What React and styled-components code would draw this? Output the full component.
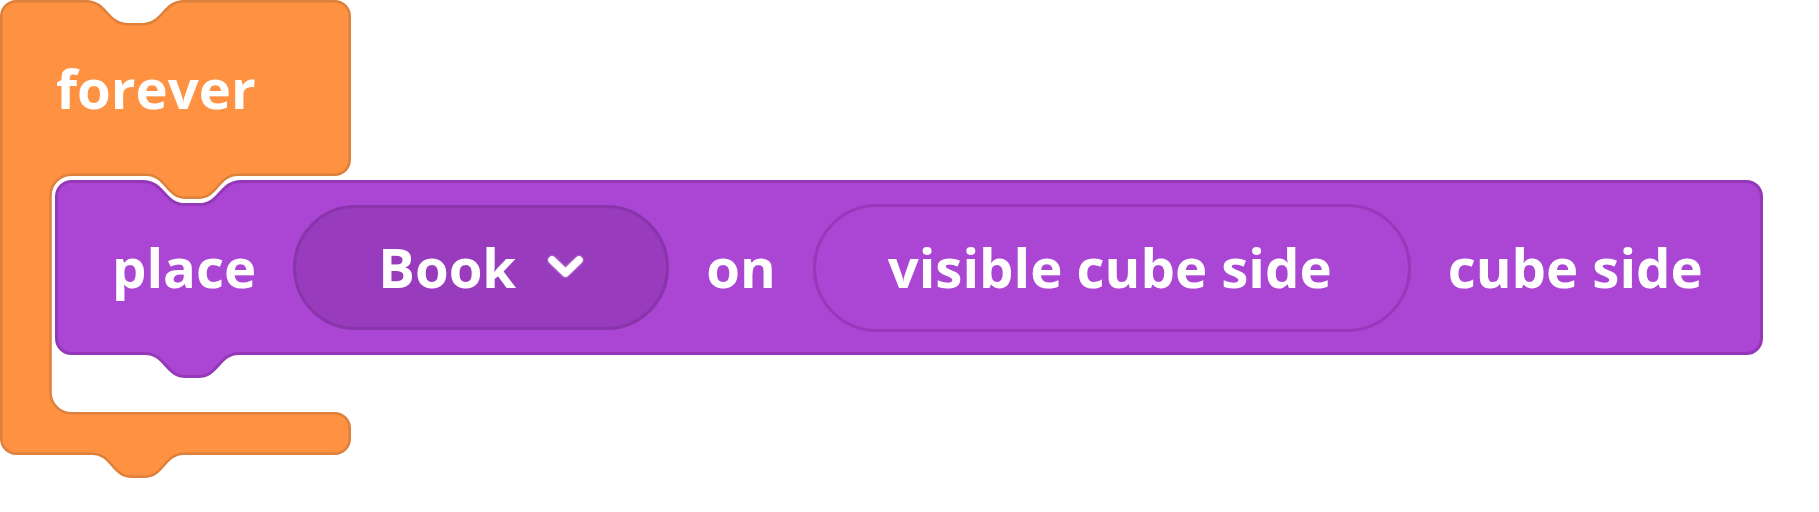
import React from 'react';
import styled, { createGlobalStyle } from 'styled-components';

const GlobalStyle = createGlobalStyle`
body {
    margin: 0;
    background: #ffffff;
    font-family: "Open Sans", "Noto Sans", sans-serif;
}
`;

// smooth notch helpers (dip going right, tab going left)
const notchRight = (x, y, d, w = 42, flat = 14) =>
    `H ${x} C ${x + w / 2} ${y}, ${x + w / 2} ${y + d}, ${x + w} ${y + d} H ${x + w + flat} C ${x + w * 1.5 + flat} ${y + d}, ${x + w * 1.5 + flat} ${y}, ${x + w * 2 + flat} ${y}`;
const notchLeft = (x, y, d, w = 42, flat = 14) =>
    `H ${x} C ${x - w / 2} ${y}, ${x - w / 2} ${y + d}, ${x - w} ${y + d} H ${x - w - flat} C ${x - w * 1.5 - flat} ${y + d}, ${x - w * 1.5 - flat} ${y}, ${x - w * 2 - flat} ${y}`;

const C_PATH = [
    'M 1.25 16.25 A 15 15 0 0 1 16.25 1.25',
    notchRight(86, 1.25, 23),
    'H 334.75 A 15 15 0 0 1 349.75 16.25 V 159.75 A 15 15 0 0 1 334.75 174.75',
    notchLeft(238, 174.75, 23, 40, 12),
    'H 71.5 A 21 21 0 0 0 50.5 195.75 V 392.25 A 21 21 0 0 0 71.5 413.25',
    'H 334.75 A 15 15 0 0 1 349.75 428.25 V 438.75 A 15 15 0 0 1 334.75 453.75',
    notchLeft(184, 453.75, 23, 40, 12),
    'H 16.25 A 15 15 0 0 1 1.25 438.75 Z',
].join(' ');

const stackPath = (w) => [
    'M 1.5 16.5 A 15 15 0 0 1 16.5 1.5',
    notchRight(88, 1.5, 23),
    `H ${w - 16.5} A 15 15 0 0 1 ${w - 1.5} 16.5 V 158.5 A 15 15 0 0 1 ${w - 16.5} 173.5`,
    notchLeft(184, 173.5, 23, 41, 12),
    'H 16.5 A 15 15 0 0 1 1.5 158.5 Z',
].join(' ');

const ControlBlock = styled.div`
position: relative;
isolation: isolate;
display: flex;
flex-direction: column;
width: max-content;
`;

const Shape = styled.svg`
position: absolute;
left: 0;
top: 0;
z-index: -1;
overflow: visible;
`;

const Header = styled.div`
display: flex;
align-items: center;
width: 351px;
height: 176px;
padding-left: 56px;
box-sizing: border-box;
`;

const Mouth = styled.div`
display: flex;
align-items: flex-start;
height: 236px;
padding: 4px 0 0 55px;
box-sizing: border-box;
`;

const Footer = styled.div`
width: 351px;
height: 68px;
`;

const Label = styled.span`
color: #ffffff;
font-size: 54.5px;
font-weight: 700;
line-height: 1;
white-space: nowrap;
`;

const StackBlock = styled.div`
position: relative;
isolation: isolate;
display: flex;
align-items: center;
gap: 37px;
height: 175px;
padding: 0 60px 0 57px;
box-sizing: border-box;
`;

const Dropdown = styled.div`
display: flex;
align-items: center;
gap: 31px;
height: 125px;
padding: 0 82px;
box-sizing: border-box;
border-radius: 63px;
background: #983bbd;
border: 3px solid #8934ab;
`;

const Slot = styled.div`
display: flex;
align-items: center;
justify-content: center;
height: 128px;
padding: 0 76px 0 72px;
box-sizing: border-box;
border-radius: 64px;
border: 3px solid #9738bb;
`;

const Chevron = styled.svg`
width: 37px;
height: 25px;
filter: drop-shadow(0 0 1px rgba(255, 255, 255, 0.7));
`;

const PlaceBlock = () => {
    const ref = React.useRef(null);
    const [width, setWidth] = React.useState(1710);

    React.useLayoutEffect(() => {
        if (ref.current) setWidth(ref.current.offsetWidth);
    }, []);

    return (
        <StackBlock ref={ref}>
            <Shape width={width} height={200}>
                <path d={stackPath(width)} fill="none" stroke="#ffffff" strokeWidth="9" strokeLinejoin="round"/>
                <path d={stackPath(width)} fill="#aa46d3" stroke="#9537b9" strokeWidth="3" strokeLinejoin="round"/>
            </Shape>
            <Label>place</Label>
            <Dropdown>
                <Label>Book</Label>
                <Chevron viewBox="0 0 37 25">
                    <polyline points="5,5 18.5,18 32,5" fill="none" stroke="#ffffff" strokeWidth="7.5" strokeLinecap="round" strokeLinejoin="round"/>
                </Chevron>
            </Dropdown>
            <Label>on</Label>
            <Slot>
                <Label>visible cube side</Label>
            </Slot>
            <Label>cube side</Label>
        </StackBlock>
    );
};

const App = () => (
    <>
        <GlobalStyle/>
        <ControlBlock>
            <Shape width={352} height={480}>
                <path d={C_PATH} fill="#ff9142" stroke="#de7f3a" strokeWidth="2.5" strokeLinejoin="round"/>
            </Shape>
            <Header>
                <Label>forever</Label>
            </Header>
            <Mouth>
                <PlaceBlock/>
            </Mouth>
            <Footer/>
        </ControlBlock>
    </>
);

export default App;
